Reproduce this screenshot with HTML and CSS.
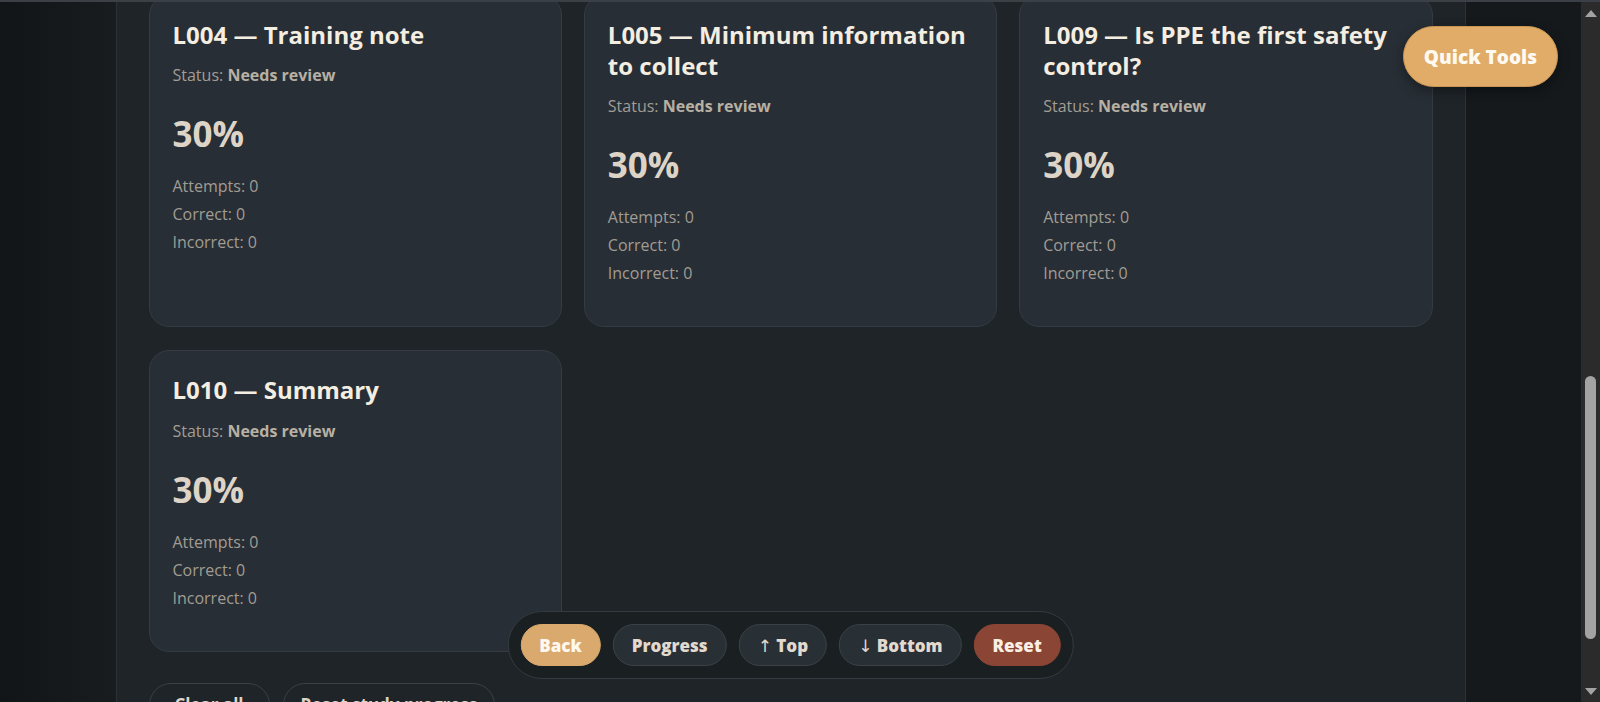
FILE: index.html
```html
<!DOCTYPE html>
<html lang="en">
<head>
    <meta charset="UTF-8">
    <meta name="viewport" content="width=device-width, initial-scale=1.0">
    <title>Study progress</title>
    <link rel="stylesheet" href="styles.css">
</head>
<body>
    <div class="appbar-edge"></div>

    <div class="screen">
        <div class="viewport">
            <main class="shell">
                <section class="lesson-grid">
                    <article class="lesson-card">
                        <h3 class="lesson-title">L004 — Training note</h3>
                        <p class="lesson-status">Status: <strong>Needs review</strong></p>
                        <div class="lesson-score">30%</div>
                        <ul class="lesson-stats">
                            <li>Attempts: 0</li>
                            <li>Correct: 0</li>
                            <li>Incorrect: 0</li>
                        </ul>
                    </article>
                    <article class="lesson-card">
                        <h3 class="lesson-title">L005 — Minimum information to collect</h3>
                        <p class="lesson-status">Status: <strong>Needs review</strong></p>
                        <div class="lesson-score">30%</div>
                        <ul class="lesson-stats">
                            <li>Attempts: 0</li>
                            <li>Correct: 0</li>
                            <li>Incorrect: 0</li>
                        </ul>
                    </article>
                    <article class="lesson-card">
                        <h3 class="lesson-title">L009 — Is PPE the first safety control?</h3>
                        <p class="lesson-status">Status: <strong>Needs review</strong></p>
                        <div class="lesson-score">30%</div>
                        <ul class="lesson-stats">
                            <li>Attempts: 0</li>
                            <li>Correct: 0</li>
                            <li>Incorrect: 0</li>
                        </ul>
                    </article>
                    <article class="lesson-card">
                        <h3 class="lesson-title">L010 — Summary</h3>
                        <p class="lesson-status">Status: <strong>Needs review</strong></p>
                        <div class="lesson-score">30%</div>
                        <ul class="lesson-stats">
                            <li>Attempts: 0</li>
                            <li>Correct: 0</li>
                            <li>Incorrect: 0</li>
                        </ul>
                    </article>
                </section>

                <div class="study-actions">
                    <button class="ghost-btn wide">Clear all</button>
                    <button class="ghost-btn">Reset study progress</button>
                </div>
            </main>

            <button class="quick-tools">Quick Tools</button>

            <nav class="dock">
                <button class="dock-btn primary">Back</button>
                <button class="dock-btn">Progress</button>
                <button class="dock-btn"><span class="arrow">↑</span> Top</button>
                <button class="dock-btn"><span class="arrow">↓</span> Bottom</button>
                <button class="dock-btn danger">Reset</button>
            </nav>
        </div>

        <div class="scrollbar">
            <span class="sb-arrow up"></span>
            <span class="sb-thumb"></span>
            <span class="sb-arrow down"></span>
        </div>
    </div>
</body>
</html>
```

FILE: styles.css
```css
html, body {
    margin: 0;
    padding: 0;
    font-family: "Open Sans", "Noto Sans", sans-serif;
    background: #15181b;
    color: #e9e2d6;
}

/* bottom edge of the sticky header, page is scrolled down */
.appbar-edge {
    position: fixed;
    top: 0;
    left: 0;
    right: 0;
    z-index: 10;
    height: 2px;
    background: #3a4046;
}

.screen {
    display: flex;
    height: 100vh;
    overflow: hidden;
}

.viewport {
    flex: 1;
    position: relative;
    overflow: hidden;
    background: linear-gradient(90deg, #121518 0%, #181c1f 7%, #15191c 30%, #15191c 100%);
}

.shell {
    box-sizing: border-box;
    max-width: 1350px;
    min-height: 100%;
    margin: 0 auto;
    padding: 0 32px;
    background: #1e2428;
    border-left: 1px solid #2c3338;
    border-right: 1px solid #2c3338;
}

.lesson-grid {
    display: grid;
    grid-template-columns: repeat(3, 1fr);
    gap: 23px 22px;
    margin-top: -5px;
}

.lesson-card {
    background: #272e35;
    border: 1px solid #343b42;
    border-radius: 20px;
    padding: 23px;
}

.lesson-title {
    margin: 0 0 13px;
    font-size: 24px;
    line-height: 1.3;
    font-weight: 700;
    color: #f4ede1;
}

.lesson-status {
    margin: 0;
    font-size: 16px;
    line-height: 24px;
    color: #a39d94;
}

.lesson-status strong {
    color: #b8b0a3;
}

.lesson-score {
    margin: 26px 0 17px;
    font-size: 35px;
    line-height: 42px;
    font-weight: 700;
    color: #ddd4c7;
}

.lesson-stats {
    list-style: none;
    margin: 0 0 16px;
    padding: 0;
    font-size: 16px;
    line-height: 28px;
    color: #a29c93;
}

.study-actions {
    display: flex;
    gap: 13px;
    margin-top: 31px;
}

.ghost-btn {
    font-family: "Open Sans", sans-serif;
    font-size: 17px;
    font-weight: 700;
    line-height: 24px;
    color: #ddd5c9;
    background: transparent;
    border: 1px solid #3a4147;
    border-radius: 24px;
    padding: 9px 17px;
}

.ghost-btn.wide {
    min-width: 121px;
}

.quick-tools {
    position: absolute;
    top: 26px;
    right: 23px;
    height: 61px;
    padding: 0 20px;
    font-family: "Open Sans", sans-serif;
    font-size: 19px;
    font-weight: 800;
    color: #fffaf1;
    background: #e0ac68;
    border: 1px solid #c99655;
    border-radius: 31px;
    box-shadow: 0 4px 12px rgba(0, 0, 0, 0.35);
}

.dock {
    position: absolute;
    left: 50%;
    bottom: 23px;
    transform: translateX(-50%);
    display: flex;
    gap: 12px;
    padding: 12px;
    background: #1a1f22;
    border: 1px solid #343a40;
    border-radius: 40px;
}

.dock-btn {
    height: 42px;
    padding: 0 18px;
    font-family: "Open Sans", sans-serif;
    font-size: 17px;
    font-weight: 800;
    white-space: nowrap;
    color: #e2dace;
    background: #283036;
    border: 1px solid #3a4147;
    border-radius: 21px;
}

.dock-btn .arrow {
    font-family: "DejaVu Sans", sans-serif;
    font-weight: 400;
}

.dock-btn.primary {
    background: #d9a96d;
    border-color: #d9a96d;
    color: #fff8ee;
}

.dock-btn.danger {
    background: #8b4535;
    border-color: #8b4535;
    color: #fbeee4;
}

/* window scrollbar */
.scrollbar {
    width: 19px;
    background: #2b2b2b;
    display: flex;
    flex-direction: column;
    align-items: center;
}

.sb-arrow {
    width: 0;
    height: 0;
    border-left: 6px solid transparent;
    border-right: 6px solid transparent;
}

.sb-arrow.up {
    margin-top: 10px;
    border-bottom: 7px solid #a3a3a3;
}

.sb-arrow.down {
    margin-top: auto;
    margin-bottom: 7px;
    border-top: 7px solid #a3a3a3;
}

.sb-thumb {
    width: 11px;
    height: 263px;
    margin-top: 359px;
    border-radius: 6px;
    background: #a3a3a3;
}
```
